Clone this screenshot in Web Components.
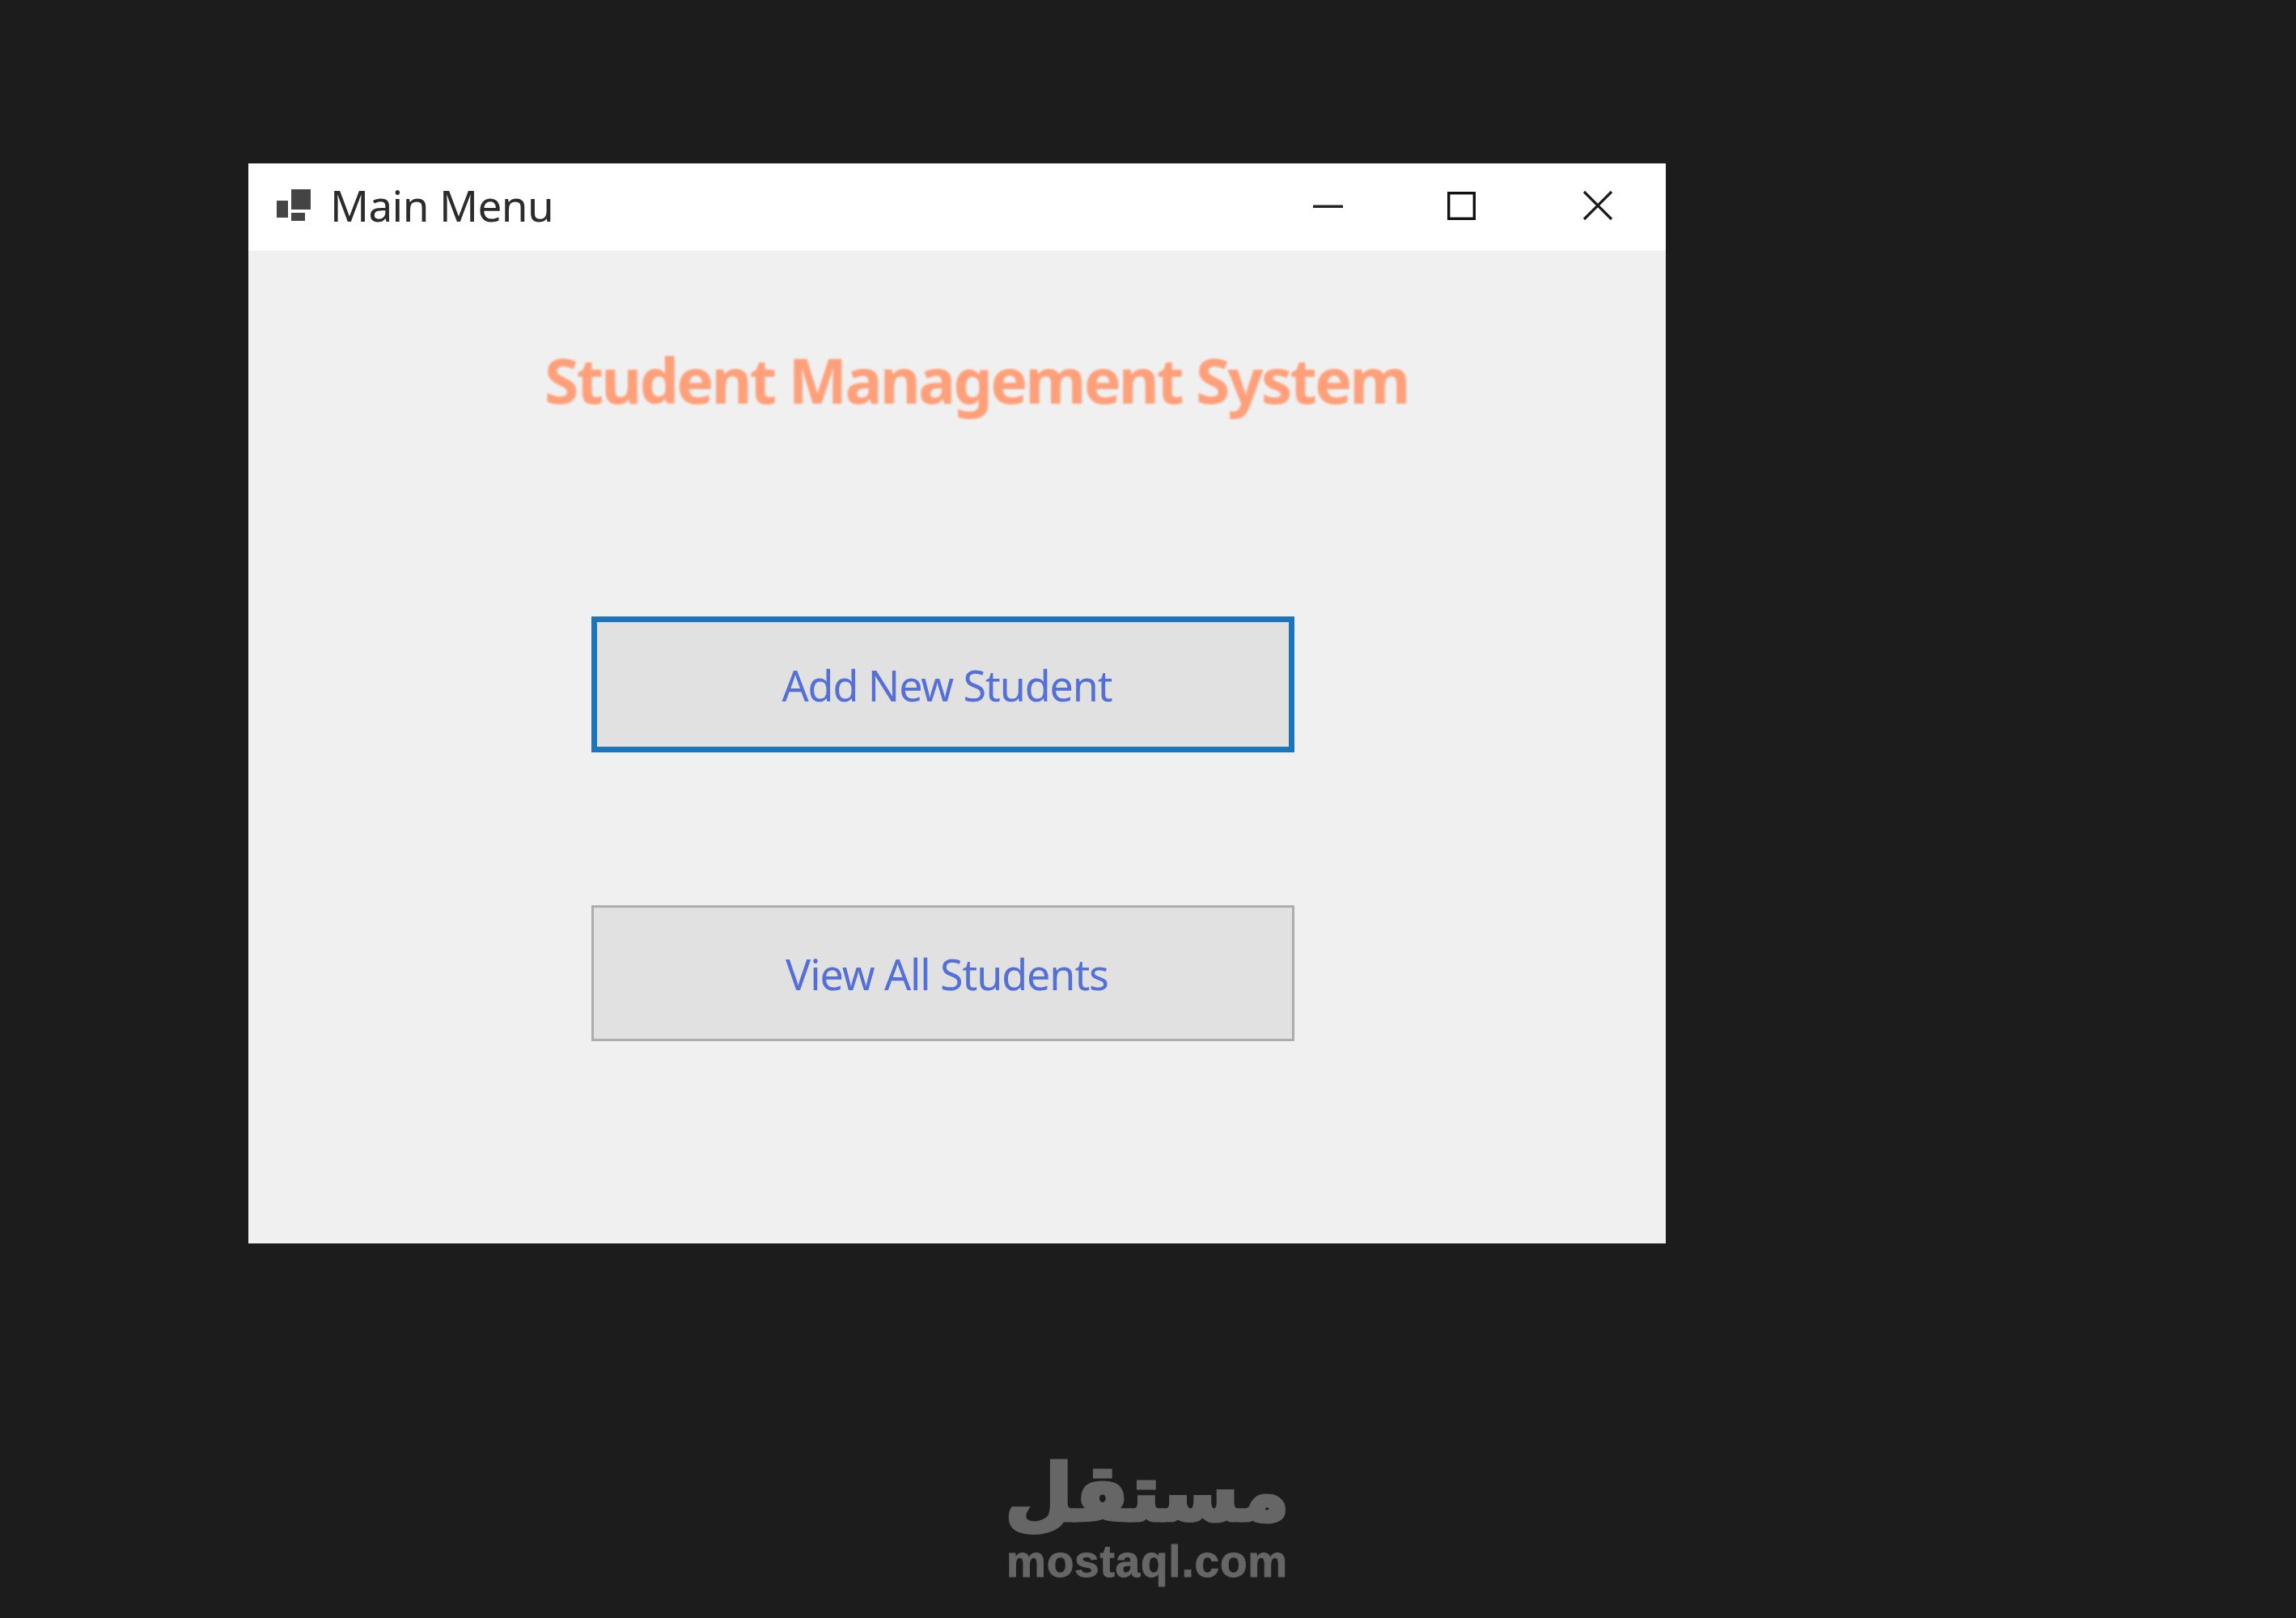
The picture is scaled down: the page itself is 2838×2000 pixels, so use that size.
<!DOCTYPE html>
<html lang="en"><head><meta charset="utf-8"><title>Main Menu</title>
<style>
html,body{margin:0;padding:0;background:#1c1c1c}
body{width:2838px;height:2000px;overflow:hidden;display:flex;flex-direction:column;font-family:"Noto Sans","Open Sans",sans-serif}
</style></head><body>
<win-dow caption="Main Menu">
  <form-heading>Student Management System</form-heading>
  <form-button focused>Add New Student</form-button>
  <form-button>View All Students</form-button>
</win-dow>
<mostaql-mark></mostaql-mark>
<script>
function def(name, html, init){
  customElements.define(name, class extends HTMLElement{
    connectedCallback(){
      if(this.shadowRoot) return;
      const r=this.attachShadow({mode:'open'});
      r.innerHTML=html;
      if(init) init(this,r);
    }
  });
}
def('win-icon',`<style>:host{display:block;width:42px;height:40px;flex:none}svg{display:block}</style>
<svg width="42" height="40" viewBox="0 0 42 40"><g fill="#444"><rect x="18" y="0" width="24" height="25"/><rect x="0" y="14" width="14" height="21"/><rect x="18" y="29" width="17" height="10"/></g></svg>`);
def('win-controls',`<style>:host{display:flex;align-items:center;flex:none}svg{display:block;overflow:visible}</style>
<svg width="37" height="36" viewBox="0 0 37 36" style="margin-right:129px"><rect x="0" y="17.5" width="37" height="3.4" fill="#222"/></svg>
<svg width="35" height="35" viewBox="0 0 35 35" style="margin-right:133px"><rect x="1.7" y="1.7" width="31.6" height="31.6" fill="none" stroke="#111" stroke-width="3.4"/></svg>
<svg width="36" height="36" viewBox="0 0 36 36"><path d="M1 1L35 35M35 1L1 35" fill="none" stroke="#1a1a1a" stroke-width="3.2"/></svg>`);
def('win-dow',`<style>
:host{display:flex;flex-direction:column;width:1752px;height:1335px;margin:202px 0 0 307px;background:#f0f0f0;flex:none}
.bar{height:108px;flex:none;background:#fff;display:flex;align-items:center;padding:0 66px 4px 35px;box-sizing:border-box}
.cap{font:400 53px/104px "Noto Sans","Open Sans",sans-serif;color:#2b2b2b;margin-left:24px;flex:1;letter-spacing:-.6px;filter:blur(.7px)}
.body{flex:1;display:flex;flex-direction:column;align-items:flex-start}
</style>
<div class="bar"><win-icon></win-icon><span class="cap"></span><win-controls></win-controls></div>
<div class="body"><slot></slot></div>`,(h,r)=>{r.querySelector('.cap').textContent=h.getAttribute('caption')});
def('form-heading',`<style>
:host{display:block;margin:115px 0 247px 366px;font:700 77px/90px "Noto Sans","Open Sans",sans-serif;color:#ffa07a;white-space:nowrap;letter-spacing:-2.8px;filter:blur(1px)}
</style><slot></slot>`);
def('form-button',`<style>
:host{display:flex;align-items:center;justify-content:center;box-sizing:border-box;width:869px;height:168px;margin:0 0 189px 424px;padding:2px 0 0 10px;background:#e1e1e1;border:3px solid #adadad;font:400 52px/1 "Noto Sans","Open Sans",sans-serif;color:#5470d8;letter-spacing:-1.1px}
:host([focused]){border:7px solid #1a75bb}
span{filter:blur(.7px)}
</style><span><slot></slot></span>`);
def('mostaql-mark',`<style>
:host{display:flex;flex-direction:column;align-items:center;width:340px;margin:260px 0 0 1248px;color:#666;flex:none}
.ar{font:700 96px/98px "DejaVu Sans",sans-serif;-webkit-text-stroke:5px #666;white-space:nowrap}
.la{font:700 55px/60px "Liberation Sans",Arial,sans-serif;-webkit-text-stroke:1px #666;white-space:nowrap;letter-spacing:.8px;margin-top:5px}
</style><div class="ar" dir="rtl" lang="ar">مستقل</div><div class="la">mostaql.com</div>`);
</script>
</body></html>
